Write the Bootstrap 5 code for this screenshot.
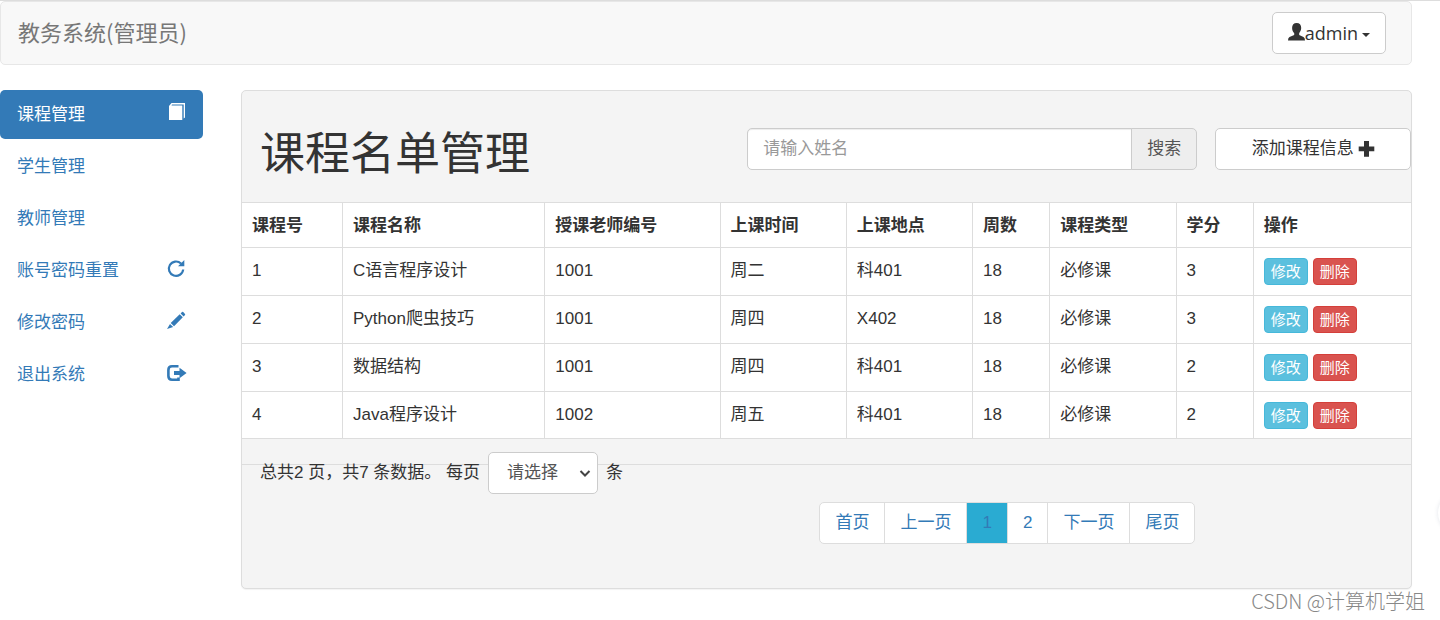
<!DOCTYPE html>
<html lang="zh-CN">
<head>
<meta charset="utf-8">
<meta name="viewport" content="width=device-width, initial-scale=1">
<title>教务系统</title>
<link href="https://cdn.jsdelivr.net/npm/bootstrap@5.3.0/dist/css/bootstrap.min.css" rel="stylesheet">
<style>
body{font-family:"Liberation Sans","Noto Sans CJK SC",sans-serif;font-size:17px;line-height:24px;color:#333;border-top:1px solid #ddd;overflow-x:hidden}
a{color:#337ab7}
.page-wrap{padding-right:28px}
.topbar{background:#f8f8f8;border:1px solid #e7e7e7;border-radius:5px;padding:10px 25px 10px 17px;margin-bottom:25px}
.topbar .navbar-brand{font-family:"Noto Sans CJK SC",sans-serif;font-size:22px;line-height:24px;color:#777;padding:0 0 4px}
.btn-plain{background:#fff;border:1px solid #ccc;border-radius:5px;color:#333;font-size:17px;line-height:24px;padding:8px 15px}
.btn-user{font-family:"Open Sans","Noto Sans CJK SC",sans-serif;font-size:18px}
.btn-user svg{vertical-align:-1px}
.btn-user::after{border-top-width:4px;border-left-width:4px;border-right-width:4px;margin-left:4px;vertical-align:3px}
.main-row{--bs-gutter-x:34px}
.side-nav{gap:3px}
.side-nav .nav-link{color:#337ab7;padding:12px 17px;line-height:25px;border-radius:5px}
.side-nav .nav-link.active{background:#337ab7;color:#fff}
.side-nav svg{overflow:visible}
.panel-box{background:#f4f4f4;border:1px solid #ddd;border-radius:5px;box-shadow:0 1px 1px rgba(0,0,0,.05)}
.panel-top{padding:30px 0 25px 18px;gap:18px}
.panel-top h1{font-size:45px;line-height:45px;font-weight:400;padding-top:11px}
.search-box{width:39.1%}
.search-box .form-control{border-color:#ccc;border-radius:5px;font-size:17px;line-height:24px;padding:8px 15px;box-shadow:inset 0 1px 1px rgba(0,0,0,.075)}
.search-box .form-control::placeholder{color:#999}
.search-box .btn{background:#eee;border-color:#ccc;border-radius:5px;color:#555;font-size:17px;line-height:24px;padding:8px 15px}
.add-btn{width:17%}
.course-table{--bs-table-bg:#fff;--bs-table-color:#333;color:#333;table-layout:fixed;border-color:#ddd}
.course-table th,.course-table td{padding:10px;line-height:26px;border:0 solid #ddd;border-bottom-width:1px;border-right-width:1px}
.course-table th{padding:10px 10px 8px}
.course-table tbody tr:last-child td{padding-bottom:9px}
.course-table thead th{border-top-width:1px}
.course-table tr>:last-child{border-right-width:0}
.w-id{width:8.6%}.w-name{width:17.3%}.w-teacher{width:15%}.w-mid{width:10.8%}.w-small{width:6.6%}
.row-actions{gap:5px}
.row-actions .btn{font-size:15px;line-height:23px;padding:1px 6px;border-radius:4px;color:#fff}
.btn-edit{background:#5bc0de;border-color:#46b8da}
.btn-del{background:#d9534f;border-color:#d43f3a}
.panel-bottom{padding:13px 0 44px}
.panel-bottom::before{content:"";position:absolute;left:0;right:0;top:25px;border-top:1px solid #ddd}
.page-size{padding-left:18px;gap:8px;margin-bottom:8px}
.page-size .form-select{width:110px;height:42px;color:#555;border-color:#ccc;border-radius:5px;font-size:17px;line-height:24px;padding:8px 18px;background-size:12px 12px;background-position:right 6px center;background-image:url("data:image/svg+xml,%3Csvg xmlns='http://www.w3.org/2000/svg' viewBox='0 0 12 12'%3E%3Cpath fill='none' stroke='%23444' stroke-width='2' d='M1.5 4l4.5 4.500 4.500-4.500'/%3E%3C/svg%3E")}
.pager{margin-left:49.4%;--bs-pagination-border-color:#ddd;--bs-pagination-border-radius:5px}
.pager .page-link{color:#337ab7;font-size:17px;line-height:24px;padding:8px 15px}
.pager .page-link.current{background:#2aabd2}
.credit{font-family:"Noto Sans CJK SC",sans-serif;font-size:20px;line-height:24px;color:#888;padding-right:15px;font-weight:300}
.side-tab{right:-38px;top:493px;width:40px;height:40px;background:#fff;box-shadow:0 0 4px rgba(60,80,120,.15)}
</style>
</head>
<body>
<div class="page-wrap">
  <nav class="navbar topbar">
    <a class="navbar-brand" href="#">教务系统(管理员)</a>
    <button type="button" class="btn btn-plain btn-user dropdown-toggle" data-bs-toggle="dropdown"><svg width="17" height="18" viewBox="0 0 17 18" fill="currentColor" aria-hidden="true"><path d="M8.700 0C11.500 0 13.300 1.900 13.200 5C13.100 7.500 12 9 11.200 10V12L15.500 14Q17 14.800 17 17.500H0Q0 14.800 1.500 14L6.200 12V10C5 9 4.200 7.500 4.100 5C4 1.900 5.800 0 8.700 0Z"/></svg>admin</button>
  </nav>
  <div class="row main-row">
    <aside class="col-2">
      <nav class="nav nav-pills flex-column side-nav me-1">
        <a class="nav-link active d-flex justify-content-between align-items-start" href="#">课程管理<svg width="18" height="20" viewBox="0 0 18 20" fill="currentColor" aria-hidden="true"><path d="M1 4L3.500 1H17V15.500L15.700 16.500V2.500H4L3.500 3.500H14.300V18H1Z"/></svg></a>
        <a class="nav-link" href="#">学生管理</a>
        <a class="nav-link" href="#">教师管理</a>
        <a class="nav-link d-flex justify-content-between align-items-start" href="#">账号密码重置<svg width="18" height="20" viewBox="0 0 18 20" aria-hidden="true"><path d="M13 5.500A7.200 7.200 0 1 0 15.200 11.500" fill="none" stroke="currentColor" stroke-width="2.200"/><path d="M16.300 2V8.300H10Z" fill="currentColor"/></svg></a>
        <a class="nav-link d-flex justify-content-between align-items-start" href="#">修改密码<svg width="18" height="20" viewBox="0 0 18 20" fill="currentColor" aria-hidden="true"><path d="M11.700 4.200L14.800 7.300L6 16.200L2.700 13ZM2 13.900L5.200 17L-1 19ZM12.600 3.400L14 2Q14.600 1.500 15.200 2L17 3.900Q17.400 4.500 17 5L15.600 6.400Z"/></svg></a>
        <a class="nav-link d-flex justify-content-between align-items-start" href="#">退出系统<svg width="18" height="20" viewBox="0 0 18 20" aria-hidden="true"><path d="M10.500 4.300H4Q.4 4.300 .4 8V14Q.4 17.700 4 17.700H10.500V15.500" fill="none" stroke="currentColor" stroke-width="2.600"/><path d="M6 9H11.500V5.800L18.600 11L11.500 16.200V13H6Z" fill="currentColor"/></svg></a>
      </nav>
    </aside>
    <main class="col-10">
      <section class="panel-box">
        <div class="panel-top d-flex align-items-center">
          <h1 class="mb-0 flex-grow-1">课程名单管理</h1>
          <form class="input-group search-box flex-shrink-0">
            <input type="text" class="form-control" placeholder="请输入姓名" aria-label="请输入姓名">
            <button type="button" class="btn">搜索</button>
          </form>
          <button type="button" class="btn btn-plain add-btn flex-shrink-0 d-flex align-items-center justify-content-center gap-1">添加课程信息<svg width="17" height="16" viewBox="0 0 17 16" fill="currentColor" aria-hidden="true"><path d="M6 0H11V5.500H16.300V10.300H11V15.700H6V10.300H.7V5.500H6Z"/></svg></button>
        </div>
        <table class="table course-table mb-0">
          <thead>
            <tr><th class="w-id">课程号</th><th class="w-name">课程名称</th><th class="w-teacher">授课老师编号</th><th class="w-mid">上课时间</th><th class="w-mid">上课地点</th><th class="w-small">周数</th><th class="w-mid">课程类型</th><th class="w-small">学分</th><th>操作</th></tr>
          </thead>
          <tbody>
            <tr><td>1</td><td>C语言程序设计</td><td>1001</td><td>周二</td><td>科401</td><td>18</td><td>必修课</td><td>3</td><td><div class="d-flex row-actions"><button type="button" class="btn btn-edit">修改</button><button type="button" class="btn btn-del">删除</button></div></td></tr>
            <tr><td>2</td><td>Python爬虫技巧</td><td>1001</td><td>周四</td><td>X402</td><td>18</td><td>必修课</td><td>3</td><td><div class="d-flex row-actions"><button type="button" class="btn btn-edit">修改</button><button type="button" class="btn btn-del">删除</button></div></td></tr>
            <tr><td>3</td><td>数据结构</td><td>1001</td><td>周四</td><td>科401</td><td>18</td><td>必修课</td><td>2</td><td><div class="d-flex row-actions"><button type="button" class="btn btn-edit">修改</button><button type="button" class="btn btn-del">删除</button></div></td></tr>
            <tr><td>4</td><td>Java程序设计</td><td>1002</td><td>周五</td><td>科401</td><td>18</td><td>必修课</td><td>2</td><td><div class="d-flex row-actions"><button type="button" class="btn btn-edit">修改</button><button type="button" class="btn btn-del">删除</button></div></td></tr>
          </tbody>
        </table>
        <div class="panel-bottom position-relative">
          <div class="page-size d-flex align-items-center position-relative">
            <label for="size">总共2 页，共7 条数据。 每页</label>
            <select id="size" class="form-select"><option>请选择</option><option>5</option><option>10</option></select>
            <span>条</span>
          </div>
          <nav aria-label="分页">
            <ul class="pagination pager mb-0">
              <li class="page-item"><a class="page-link" href="#">首页</a></li>
              <li class="page-item"><a class="page-link" href="#">上一页</a></li>
              <li class="page-item"><a class="page-link current" href="#">1</a></li>
              <li class="page-item"><a class="page-link" href="#">2</a></li>
              <li class="page-item"><a class="page-link" href="#">下一页</a></li>
              <li class="page-item"><a class="page-link" href="#">尾页</a></li>
            </ul>
          </nav>
        </div>
      </section>
    </main>
  </div>
</div>
<footer class="credit text-end">CSDN @计算机学姐</footer>
<div class="side-tab position-fixed rounded-circle"></div>
<script src="https://cdn.jsdelivr.net/npm/bootstrap@5.3.0/dist/js/bootstrap.bundle.min.js"></script>
</body>
</html>
